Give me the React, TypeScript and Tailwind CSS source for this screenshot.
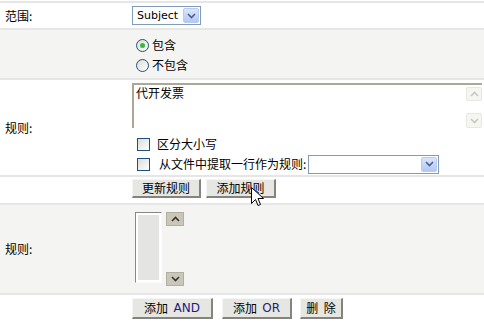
import React from 'react'

const cjk = { fontFamily: '"Noto Sans CJK SC", "DejaVu Sans", sans-serif' }

function Chevron({ up = false, color = '#4d6185' }: { up?: boolean; color?: string }) {
  return (
    <svg width="9" height="6" viewBox="0 0 9 6">
      <path
        d={up ? 'M1 5 L4.5 1.5 L8 5' : 'M1 1 L4.5 4.5 L8 1'}
        fill="none"
        stroke={color}
        strokeWidth="1.6"
      />
    </svg>
  )
}

function XpSelect({ width, text }: { width: string; text?: string }) {
  return (
    <div className={`${width} h-[19px] border border-[#7f9db9] bg-white flex items-center justify-between pl-[4px] pr-px`}>
      <span className="leading-none text-black" style={{ fontFamily: '"DejaVu Sans", sans-serif', fontSize: 11 }}>
        {text}
      </span>
      <div className="w-[16px] h-[15px] rounded-[2px] border border-[#b9cbf3] bg-gradient-to-b from-[#dbe5fd] to-[#b3c8f5] flex items-center justify-center">
        <Chevron />
      </div>
    </div>
  )
}

function Radio({ checked }: { checked?: boolean }) {
  return (
    <span className="w-[13px] h-[13px] rounded-full border border-[#1c5180] bg-gradient-to-br from-[#dcdcd6] to-white flex items-center justify-center">
      {checked && <span className="w-[5px] h-[5px] rounded-full bg-[#3ab83a]" />}
    </span>
  )
}

function Checkbox() {
  return <span className="w-[13px] h-[13px] border border-[#1c5180] bg-gradient-to-br from-[#dcdcd6] to-white" />
}

function Btn({ children, w }: { children: React.ReactNode; w: string }) {
  return (
    <div
      className={`${w} h-full bg-[#e6e6e2] border border-[#f5f5f5] border-r-2 border-b-2 border-r-[#84837c] border-b-[#84837c] flex items-center justify-center text-[12px] leading-none text-black`}
      style={cjk}
    >
      {children}
    </div>
  )
}

function Label({ children }: { children: React.ReactNode }) {
  return (
    <div className="w-[132px] shrink-0 pl-[5px] text-[12px] text-black" style={cjk}>
      {children}
    </div>
  )
}

export default function App() {
  return (
    <div className="w-[484px] h-[323px] bg-white relative overflow-hidden" style={cjk}>
      <div className="pt-px">
        {/* 范围 */}
        <div className="h-[29px] flex items-center border-t-2 border-b-2 border-[#e6e6e6] bg-white">
          <Label>范围:</Label>
          <XpSelect width="w-[69px]" text="Subject" />
        </div>

        {/* 包含 / 不包含 */}
        <div className="h-[50px] bg-[#f4f4f2] border-b-2 border-[#e6e6e6] flex">
          <Label>{''}</Label>
          <div className="pt-[5px] pl-[4px] flex flex-col">
            <label className="h-[20px] flex items-center gap-[3px] text-[12px]">
              <Radio checked />
              <span>包含</span>
            </label>
            <label className="h-[20px] flex items-center gap-[3px] text-[12px]">
              <Radio />
              <span>不包含</span>
            </label>
          </div>
        </div>

        {/* 规则 text */}
        <div className="h-[97px] bg-white border-b-2 border-[#e6e6e6] flex items-center">
          <Label>规则:</Label>
          <div className="flex flex-col self-start pt-[3px]">
            <div className="w-[350px] h-[45px] border-t-2 border-l-2 border-[#aca899] flex">
              <div className="flex-1 px-[2px] pt-[1px] text-[12px] leading-[14px]">代开发票</div>
              <div className="w-[16px] flex flex-col justify-between pt-[2px]">
                <div className="h-[14px] rounded-[2px] border border-[#e8e8e3] bg-[#f5f5f1] flex items-center justify-center">
                  <Chevron up color="#c9c8c0" />
                </div>
                <div className="h-[15px] rounded-[2px] border border-[#e8e8e3] bg-[#f5f5f1] flex items-center justify-center">
                  <Chevron color="#c9c8c0" />
                </div>
              </div>
            </div>
            <div className="pl-[5px] pt-[6px] flex flex-col">
              <label className="h-[20px] flex items-center gap-[7px] text-[12px]">
                <Checkbox />
                <span>区分大小写</span>
              </label>
              <label className="h-[20px] flex items-center gap-[9px] text-[12px]">
                <Checkbox />
                <span className="flex items-center">
                  从文件中提取一行作为规则:
                  <span className="ml-[2px]">
                    <XpSelect width="w-[131px]" />
                  </span>
                </span>
              </label>
            </div>
          </div>
        </div>

        {/* 更新/添加 buttons */}
        <div className="h-[28px] bg-white border-b-2 border-[#e6e6e6] flex items-start">
          <Label>{''}</Label>
          <div className="h-[19px] mt-[2px] flex gap-[5px]">
            <Btn w="w-[69px]">更新规则</Btn>
            <Btn w="w-[70px]">添加规则</Btn>
          </div>
        </div>

        {/* 规则 list */}
        <div className="h-[90px] bg-[#f4f4f2] border-b-2 border-[#e6e6e6] flex items-center">
          <Label>规则:</Label>
          <div className="flex gap-[4px] pl-[3px]">
            <div className="w-[27px] h-[71px] border border-[#8a897f] border-r-[#fbfbf8] border-b-[#fbfbf8] bg-white p-[2px]">
              <div className="w-full h-full bg-[#e4e4e2]" />
            </div>
            <div className="flex flex-col justify-between h-[74px]">
              <div className="w-[18px] h-[14px] bg-[#cbc7b8] border border-[#b3af9f] flex items-center justify-center">
                <Chevron up color="#333" />
              </div>
              <div className="w-[18px] h-[14px] bg-[#cbc7b8] border border-[#b3af9f] flex items-center justify-center">
                <Chevron color="#333" />
              </div>
            </div>
          </div>
        </div>

        {/* bottom buttons */}
        <div className="h-[28px] bg-white flex items-start">
          <Label>{''}</Label>
          <div className="h-[21px] mt-[3px] flex">
            <Btn w="w-[81px]">
              添加&nbsp;&nbsp;<span style={{ fontFamily: '"DejaVu Sans", sans-serif', color: '#1c1c80' }}>AND</span>
            </Btn>
            <div className="ml-[9px]">
              <Btn w="w-[70px]">
                添加&nbsp;&nbsp;<span style={{ fontFamily: '"DejaVu Sans", sans-serif', color: '#2a1a70' }}>OR</span>
              </Btn>
            </div>
            <div className="ml-[8px]">
              <Btn w="w-[43px]">删&nbsp;&nbsp;除</Btn>
            </div>
          </div>
        </div>
      </div>

      {/* mouse pointer */}
      <svg className="absolute left-[251px] top-[187px]" width="13" height="21" viewBox="0 0 13 21">
        <path
          d="M0.5 0.5 L0.5 16.5 L4.5 12.5 L7 18.5 L9.5 17.5 L7 11.5 L12.5 11.5 Z"
          fill="#fff"
          stroke="#000"
          strokeWidth="1"
        />
      </svg>
    </div>
  )
}
